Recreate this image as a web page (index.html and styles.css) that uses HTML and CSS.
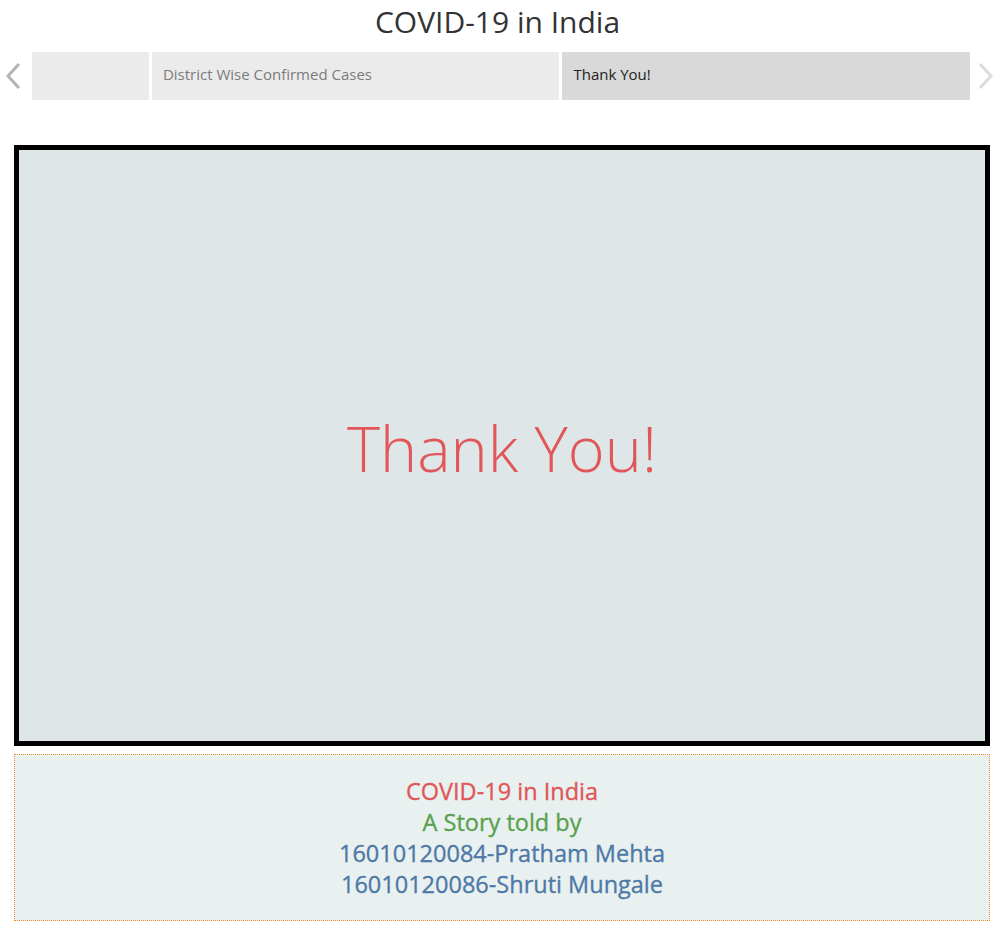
FILE: index.html
```html
<!DOCTYPE html>
<html>
<head>
<meta charset="utf-8">
<link rel="stylesheet" href="styles.css">
</head>
<body>
<div class="page">
  <h1 class="title">COVID-19 in India</h1>
  <div class="nav">
    <div class="arrow arrow-left">
      <svg width="18" height="28" viewBox="0 0 18 28"><polyline points="15,2 4,14 15,26" fill="none" stroke="#b5b5b5" stroke-width="3"/></svg>
    </div>
    <div class="tabs">
      <div class="tab tab-first"></div>
      <div class="tab tab-mid">District Wise Confirmed Cases</div>
      <div class="tab tab-active">Thank You!</div>
    </div>
    <div class="arrow arrow-right">
      <svg width="18" height="28" viewBox="0 0 18 28"><polyline points="3,2 14,14 3,26" fill="none" stroke="#dcdcdc" stroke-width="3"/></svg>
    </div>
  </div>
  <div class="main">
    <div class="thanks">Thank You!</div>
  </div>
  <div class="credits">
    <div class="c-red">COVID-19 in India</div>
    <div class="c-green">A Story told by</div>
    <div class="c-blue">16010120084-Pratham Mehta</div>
    <div class="c-blue">16010120086-Shruti Mungale</div>
  </div>
</div>
</body>
</html>
```

FILE: styles.css
```css
html, body {
  margin: 0;
  padding: 0;
  background: #ffffff;
  font-family: "Open Sans", "Noto Sans", sans-serif;
}
.page {
  width: 995px;
  height: 925px;
  display: flex;
  flex-direction: column;
}
.title {
  margin: 0;
  height: 52px;
  font-size: 30px;
  font-weight: 400;
  color: #333333;
  text-align: center;
  line-height: 44px;
}
.nav {
  display: flex;
  height: 48px;
  align-items: stretch;
}
.arrow {
  width: 32px;
  display: flex;
  align-items: center;
  justify-content: center;
}
.arrow-left {
  justify-content: flex-start;
  padding-left: 4px;
  width: 28px;
}
.arrow-right {
  width: 25px;
  justify-content: flex-end;
}
.tabs {
  display: flex;
  gap: 3px;
  width: 938px;
}
.tab {
  background: #ebebeb;
  font-size: 15px;
  display: flex;
  align-items: center;
  padding-left: 11px;
  padding-bottom: 5px;
  box-sizing: border-box;
}
.tab-first {
  width: 117px;
}
.tab-mid {
  width: 408px;
  color: #7b7b7b;
}
.tab-active {
  width: 408px;
  background: #d9d9d9;
  color: #222222;
}
.main {
  margin: 45px 5px 0 14px;
  height: 601px;
  box-sizing: border-box;
  border: 5px solid #000000;
  background: #dfe6e8;
  display: flex;
  align-items: center;
  justify-content: center;
}
.thanks {
  font-size: 63px;
  font-weight: 300;
  color: #e15759;
  margin-top: 4px;
}
.credits {
  margin: 8px 5px 0 14px;
  height: 167px;
  box-sizing: border-box;
  border: 1px dotted #f28e2b;
  background: #e9f1f0;
  display: flex;
  flex-direction: column;
  align-items: center;
  justify-content: center;
  font-size: 23.5px;
  font-weight: 400;
  line-height: 31px;
  -webkit-text-stroke: 0.35px currentColor;
}
.c-red { color: #e15759; }
.c-green { color: #59a14f; }
.c-blue { color: #4e79a7; }
```
